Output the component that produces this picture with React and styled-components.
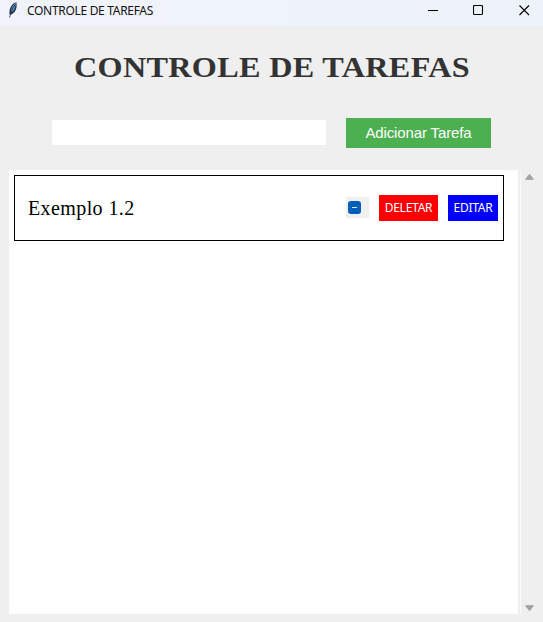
import React from "react";
import styled, { createGlobalStyle } from "styled-components";

const GlobalStyle = createGlobalStyle`
  * { box-sizing: border-box; }
  body { margin: 0; background: #efefef; overflow: hidden; }
`;

const Window = styled.div`
  width: 543px;
  height: 622px;
  display: flex;
  flex-direction: column;
  background: #efefef;
  overflow: hidden;
`;

const TitleBar = styled.header`
  width: 547px;
  height: 26px;
  flex: none;
  display: flex;
  align-items: flex-start;
  background: linear-gradient(90deg, #f1f3fb, #edf3f9);
`;

const Feather = styled.svg`
  width: 14px;
  height: 18px;
  margin: 1px 0 0 6px;
`;

const Caption = styled.span`
  margin-left: 7px;
  flex: 1;
  font: 12px/22px "Noto Sans", sans-serif;
  letter-spacing: -0.31px;
  color: #111;
  white-space: nowrap;
`;

const WindowButton = styled.button`
  width: 45.5px;
  height: 21px;
  padding: 0;
  border: 0;
  background: none;
  display: flex;
  align-items: center;
  justify-content: center;
  svg { display: block; }
`;

const Heading = styled.h1`
  margin: 21px 0 0 74px;
  height: 40px;
  font: bold 30px/40px "Liberation Serif", serif;
  letter-spacing: 0.3px;
  color: #333;
  white-space: nowrap;
  transform: scaleX(1.073);
  transform-origin: left center;
`;

const Form = styled.form`
  display: flex;
  align-items: flex-start;
  gap: 20px;
  height: 30px;
  margin: 31px 0 0 52px;
`;

const TaskInput = styled.input`
  width: 274px;
  height: 25px;
  margin: 2px 0 0;
  border: 0;
  padding: 0 4px;
  background: #fff;
`;

const AddButton = styled.button`
  width: 145px;
  height: 30px;
  border: 0;
  padding: 0;
  background: #4caf50;
  color: #fff;
  font: 15px/30px "Liberation Sans", sans-serif;
  letter-spacing: -0.12px;
  white-space: nowrap;
`;

const ListArea = styled.main`
  display: flex;
  height: 444px;
  margin: 22px 0 0 9px;
`;

const TaskList = styled.section`
  width: 509px;
  padding: 5px;
  background: #fff;
`;

const TaskCard = styled.article`
  width: 490px;
  height: 66px;
  border: 1px solid #000;
  padding: 0 5px 0 13px;
  display: flex;
  align-items: center;
  gap: 10px;
`;

const TaskName = styled.span`
  flex: 1;
  font: 20px/26px "Liberation Serif", serif;
  letter-spacing: 0.4px;
  color: #000;
  white-space: nowrap;
`;

const CheckBox = styled.span`
  width: 23px;
  height: 21px;
  margin-bottom: 1px;
  padding-left: 2px;
  display: flex;
  align-items: center;
  background: #f0f0f0;
  svg { display: block; }
`;

const ActionButton = styled.button`
  width: ${(p) => p.$width}px;
  height: 26px;
  border: 0;
  padding: 0;
  background: ${(p) => p.$color};
  color: #fff;
  font: 12px/26px "Noto Sans", sans-serif;
  letter-spacing: -0.25px;
  white-space: nowrap;
`;

const ScrollBar = styled.div`
  width: 19px;
  margin-left: 2px;
  padding: 4px 2px 3px 0;
  border-left: 1px solid #fafafa;
  display: flex;
  flex-direction: column;
  justify-content: space-between;
  align-items: center;
  svg { display: block; }
`;

export default function App() {
  return (
    <Window>
      <GlobalStyle />
      <TitleBar>
        <Feather viewBox="0 0 14 18">
          <path d="M10.5 1.2C7 2 4.2 5.2 3.6 9.2L3.4 13l1.2.8C8 12.5 10 9.5 10.6 6z" fill="#1d3450" />
          <path d="M9.8 2C7 3.6 5.2 6.5 4.8 10l-.2 1.8C8 10 9.8 6.5 9.8 2z" fill="#5c91c6" />
          <path d="M8.8 4C6.2 7.5 4.8 11 3.6 16.5" fill="none" stroke="#17232f" strokeWidth=".8" />
        </Feather>
        <Caption>CONTROLE DE TAREFAS</Caption>
        <WindowButton aria-label="Minimizar">
          <svg width="11" height="11"><path d="M0 5.5H10" stroke="#000" /></svg>
        </WindowButton>
        <WindowButton aria-label="Maximizar">
          <svg width="11" height="11"><rect x=".5" y=".5" width="9" height="9" rx="1" fill="none" stroke="#000" strokeWidth="1.1" /></svg>
        </WindowButton>
        <WindowButton aria-label="Fechar">
          <svg width="11" height="11"><path d="M.5.5l9.5 9.5M10 .5L.5 10" stroke="#000" strokeWidth="1.1" /></svg>
        </WindowButton>
      </TitleBar>
      <Heading>CONTROLE DE TAREFAS</Heading>
      <Form>
        <TaskInput />
        <AddButton type="button">Adicionar Tarefa</AddButton>
      </Form>
      <ListArea>
        <TaskList>
          <TaskCard>
            <TaskName>Exemplo 1.2</TaskName>
            <CheckBox>
              <svg width="13" height="13">
                <rect width="13" height="13" rx="3" fill="#005fb8" />
                <path d="M4 6.5h5" stroke="#d5e6f6" />
              </svg>
            </CheckBox>
            <ActionButton $width={59} $color="#ff0000">DELETAR</ActionButton>
            <ActionButton $width={50} $color="#0000ff">EDITAR</ActionButton>
          </TaskCard>
        </TaskList>
        <ScrollBar>
          <svg width="9" height="6"><path d="M4.5 .8L8 5.2H1z" fill="#a0a0a0" stroke="#a0a0a0" strokeWidth="1.3" strokeLinejoin="round" /></svg>
          <svg width="9" height="6"><path d="M4.5 5.2L8 .8H1z" fill="#a0a0a0" stroke="#a0a0a0" strokeWidth="1.3" strokeLinejoin="round" /></svg>
        </ScrollBar>
      </ListArea>
    </Window>
  );
}
